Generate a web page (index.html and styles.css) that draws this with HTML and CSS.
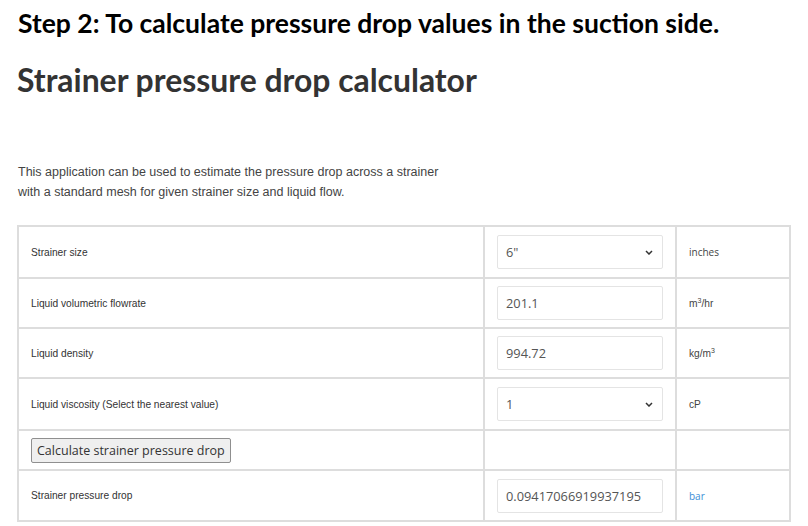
FILE: index.html
```html
<!DOCTYPE html>
<html>
<head>
<meta charset="utf-8">
<link rel="stylesheet" href="styles.css">
</head>
<body>
<div class="page">
  <div class="step">Step 2: To calculate pressure drop values in the suction side.</div>
  <h1 class="title">Strainer pressure drop calculator</h1>
  <p class="intro">This application can be used to estimate the pressure drop across a strainer<br>with a standard mesh for given strainer size and liquid flow.</p>
  <table class="calc">
    <colgroup><col class="c1"><col class="c2"><col class="c3"></colgroup>
    <tr class="r1">
      <td class="label">Strainer size</td>
      <td class="field"><div class="select"><span>6"</span><svg class="chev" width="8" height="5" viewBox="0 0 8 5"><path d="M1 1l3 3 3-3" fill="none" stroke="#333" stroke-width="1.5"/></svg></div></td>
      <td class="unit os">inches</td>
    </tr>
    <tr class="r2">
      <td class="label">Liquid volumetric flowrate</td>
      <td class="field"><div class="input">201.1</div></td>
      <td class="unit">m<sup>3</sup>/hr</td>
    </tr>
    <tr class="r3">
      <td class="label">Liquid density</td>
      <td class="field"><div class="input">994.72</div></td>
      <td class="unit">kg/m<sup>3</sup></td>
    </tr>
    <tr class="r4">
      <td class="label">Liquid viscosity (Select the nearest value)</td>
      <td class="field"><div class="select"><span>1</span><svg class="chev" width="8" height="5" viewBox="0 0 8 5"><path d="M1 1l3 3 3-3" fill="none" stroke="#333" stroke-width="1.5"/></svg></div></td>
      <td class="unit">cP</td>
    </tr>
    <tr class="r5">
      <td class="btncell"><button class="btn">Calculate strainer pressure drop</button></td>
      <td></td>
      <td></td>
    </tr>
    <tr class="r6">
      <td class="label">Strainer pressure drop</td>
      <td class="field"><div class="input">0.09417066919937195</div></td>
      <td class="unit blue">bar</td>
    </tr>
  </table>
</div>
</body>
</html>
```

FILE: styles.css
```css
html, body {
  margin: 0;
  padding: 0;
  background: #fff;
}
.page {
  padding: 7px 0 0 17px;
  width: 772px;
}
.step {
  font-family: Lato, "Open Sans", sans-serif;
  font-weight: 700;
  font-size: 26.5px;
  line-height: 32px;
  color: #000;
  margin-left: 1px;
}
.title {
  font-family: Lato, sans-serif;
  font-weight: 700;
  font-size: 31.9px;
  line-height: 40px;
  color: #333;
  margin: 21px 0 0 0;
}
.intro {
  font-family: "Liberation Sans", Arial, sans-serif;
  font-size: 12.5px;
  line-height: 20px;
  color: #444;
  margin: 62px 0 0 1px;
}
.calc {
  margin-top: 23px;
  border-collapse: collapse;
  width: 772px;
  table-layout: fixed;
}
.calc col.c1 { width: 466px; }
.calc col.c2 { width: 192px; }
.calc col.c3 { width: 114px; }
.calc td {
  border: 2px solid #ddd;
  padding: 0 12px;
  vertical-align: middle;
}
.calc tr.r1 { height: 52px; }
.calc tr.r2 { height: 50px; }
.calc tr.r3 { height: 50px; }
.calc tr.r4 { height: 52px; }
.calc tr.r5 { height: 40px; }
.calc tr.r6 { height: 51px; }
.label {
  font-family: "Liberation Sans", Arial, sans-serif;
  font-size: 10.2px;
  color: #333;
}
.unit {
  font-family: "Liberation Sans", Arial, sans-serif;
  font-size: 10.2px;
  color: #444;
}
.unit.os {
  font-family: "Open Sans", sans-serif;
  font-size: 10px;
}
.unit sup {
  font-size: 7px;
  vertical-align: 4px;
  line-height: 0;
}
.unit.blue { color: #3b8ed6; font-family: "Open Sans", sans-serif; font-size: 10px; }
.select, .input {
  box-sizing: border-box;
  height: 34px;
  border: 1px solid #e4e4e4;
  border-radius: 2px;
  background: #fff;
  font-family: "Open Sans", sans-serif;
  font-size: 12.8px;
  color: #555;
  padding: 0 9px 0 8px;
  display: flex;
  align-items: center;
}
.select {
  justify-content: space-between;
}
.chev { display: block; }
.btncell { padding-left: 12px; }
.btn {
  font-family: "Open Sans", sans-serif;
  font-size: 12.5px;
  color: #333;
  background: #efefef;
  border: 1px solid #8f8f8f;
  border-radius: 2px;
  padding: 2px 5px;
  height: 25px;
}
```
